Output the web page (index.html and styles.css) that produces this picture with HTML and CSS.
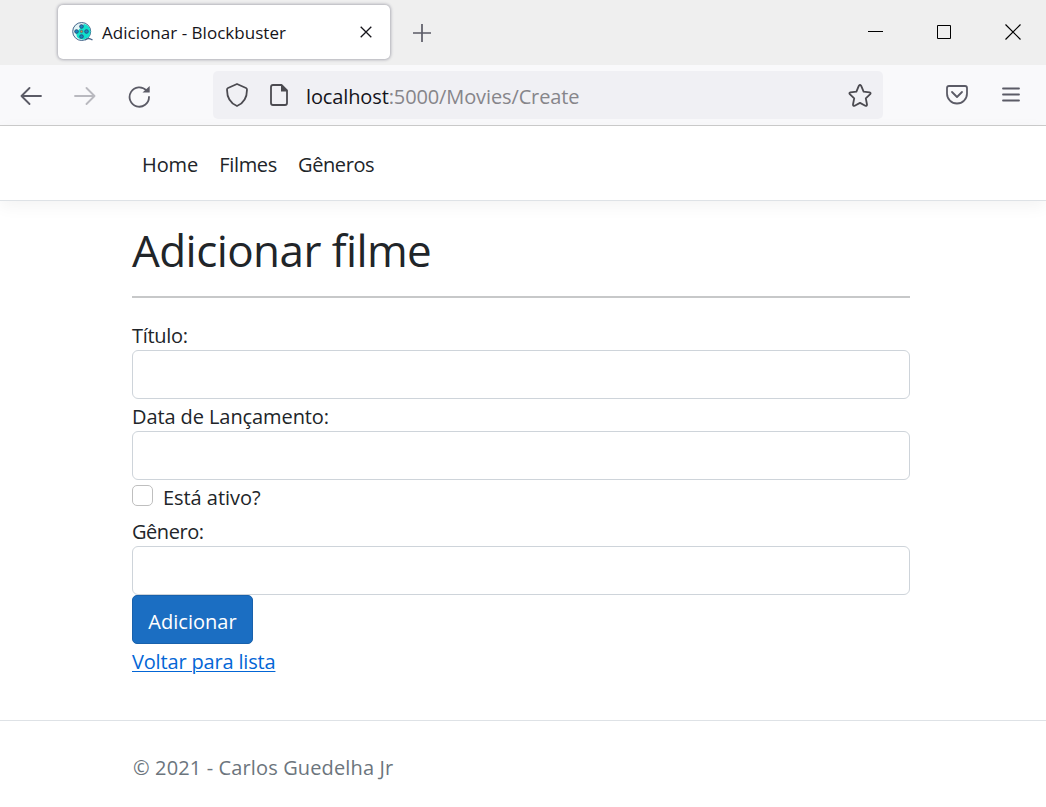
FILE: index.html
```html
<!DOCTYPE html>
<html lang="pt-BR">
<head>
<meta charset="utf-8">
<title>Adicionar - Blockbuster</title>
<link rel="stylesheet" href="styles.css">
</head>
<body>
<div class="tabs">
  <div class="tab">
    <svg class="favicon" width="22" height="20" viewBox="0 0 22 20">
      <circle cx="9.7" cy="9.5" r="9" fill="#e2f4f6" stroke="#44648a"/>
      <path d="M12 2a7.800 7.800 0 1 1-7 13l-1-4 6-7z" fill="#10e0cc"/>
      <g fill="#1787c5" stroke="#28507c"><circle cx="9.5" cy="4.5" r="1.800"/><circle cx="4.500" cy="9.500" r="1.800"/><circle cx="14.500" cy="9.500" r="1.800"/><circle cx="9.500" cy="14.500" r="1.800"/></g>
      <circle cx="9.5" cy="9.5" r="1.200" fill="#d99145" stroke="#28507c" stroke-width=".6"/>
      <path d="M13 18c3-2 4-2 7.500 0" fill="none" stroke="#44648a" stroke-width="1.4"/>
    </svg>
    <span class="tab-title">Adicionar - Blockbuster</span>
    <svg class="tab-close" width="12" height="12" viewBox="0 0 12 12"><path d="M.7.7l10.600 10.600M11.300.7L.7 11.300" stroke="#15141a" stroke-width="1.3"/></svg>
  </div>
  <svg class="new-tab" width="18" height="18" viewBox="0 0 18 18"><path d="M9 0v18M0 9h18" stroke="#5b5b66" stroke-width="1.7"/></svg>
  <div class="window-controls">
    <svg width="15" height="15" viewBox="0 0 15 15"><path d="M0 6.500h15" stroke="#000"/></svg>
    <svg class="maximize" width="14" height="14" viewBox="0 0 14 14"><path d="M.5.5h13v13H.5z" fill="none" stroke="#000"/></svg>
    <svg class="close" width="16" height="16" viewBox="0 0 16 16"><path d="M.5.500l15 15M15.500.500l-15 15" stroke="#000" stroke-width="1.200"/></svg>
  </div>
</div>
<div class="toolbar">
  <svg class="back" width="22" height="18" viewBox="0 0 22 18"><path d="M21 9H1.500M9.500 1l-8 8 8 8" class="stroke"/></svg>
  <svg class="forward" width="22" height="18" viewBox="0 0 22 18"><path d="M1 9h19.500M12.500 1l8 8-8 8" class="stroke"/></svg>
  <svg class="reload" width="23" height="23" viewBox="0 0 23 23"><path d="M18.500 5.500A9.700 9.700 0 1 0 21 12" class="stroke"/><path d="M21.700 1v6.500h-7.200z" fill="#5b5b66"/></svg>
  <div class="address">
    <svg class="shield" width="22" height="24" viewBox="0 0 22 24"><path d="M11 1l9 4q1 .5 1 1.700C21 14 18 20 11 23 4 20 1 14 1 6.700Q1 5.500 2 5z" class="stroke dark"/></svg>
    <svg class="page" width="18" height="22" viewBox="0 0 18 22"><path d="M3 1h8.500L17 6.500V19q0 2-2 2H3q-2 0-2-2V3q0-2 2-2z" class="stroke dark"/><path d="M11 1v6.500h6.200z" fill="#4b4a50"/></svg>
    <span class="url"><span class="host">localhost</span>:5000/Movies/Create</span>
    <svg class="star" width="24" height="23" viewBox="0 0 24 23"><path d="M10.900 1.700q1.100-1.400 2.200 0L15.600 7.700l6 .7q1.600.4.600 1.700L17.800 14.300l1.200 6.200q0 1.800-1.700 1.200L12 18.900l-5.300 2.800Q5 22.300 5 20.500l1.200-6.200-4.400-4.200q-1-1.300.6-1.700l6-.7z" class="stroke dark"/></svg>
  </div>
  <svg class="pocket" width="22" height="20" viewBox="0 0 22 20"><path d="M3 1h16q2 0 2 2v5.500a10 10 0 0 1-20 0V3q0-2 2-2z" class="stroke"/><path d="M6 7l5 5 5-5" class="stroke"/></svg>
  <svg class="menu" width="18" height="15" viewBox="0 0 18 15"><path d="M1 1.500h16M1 7.500h16M1 13.500h16" class="stroke"/></svg>
</div>
<header class="site-header">
  <nav class="nav"><a class="nav-home">Home</a><a class="nav-movies">Filmes</a><a class="nav-genres">Gêneros</a></nav>
</header>
<main class="container">
  <h1 class="title">Adicionar filme</h1>
  <hr class="rule">
  <form class="form">
    <label class="label" for="t"><span class="l-title">Título:</span></label>
    <input class="input" id="t">
    <label class="label" for="d"><span class="l-date">Data de Lançamento:</span></label>
    <input class="input" id="d">
    <label class="check"><input class="checkbox" type="checkbox"><span class="l-active">Está ativo?</span></label>
    <label class="label" for="g"><span class="l-genre">Gênero:</span></label>
    <input class="input" id="g">
    <button class="button" type="button">Adicionar</button>
  </form>
  <div class="back-row"><a class="link" href="#">Voltar para lista</a></div>
</main>
<footer class="footer"><span class="copyright">© 2021 - Carlos Guedelha Jr</span></footer>
</body>
</html>
```
FILE: styles.css
```css
* { box-sizing: border-box; }
body { margin: 0; height: 807px; overflow: hidden; background: #fff; color: #212529; font: 20px/32px "Open Sans", "Noto Sans", sans-serif; font-kerning: normal; }
svg { display: block; flex: none; }
span, a { white-space: nowrap; }
.stroke { fill: none; stroke: #5b5b66; stroke-width: 1.8; stroke-linecap: round; stroke-linejoin: round; }
.dark { stroke: #4b4a50; }

.tabs { height: 65px; background: #efefef; display: flex; align-items: center; padding: 0 25px 0 58px; }
.tab { width: 332px; height: 54px; margin-bottom: 2px; background: #fff; border-radius: 5px; box-shadow: 0 0 3px 1px #b0b0b8; display: flex; align-items: center; padding: 0 18px 0 14px; }
.tab-title { margin: 2px 0 0 8px; font-size: 17px; color: #15141a; letter-spacing: .03px; }
.tab-close { margin: 1px 0 0 auto; }
.new-tab { margin-left: 23px; }
.window-controls { margin-left: auto; display: flex; align-items: center; gap: 54px; }
.maximize, .close { margin-bottom: 2px; }

.toolbar { height: 61px; background: #f9f9fb; border-bottom: 1px solid #ccc; display: flex; align-items: center; padding-left: 20px; }
.back { margin-top: 2px; }
.forward { margin: 2px 0 0 32px; opacity: .4; }
.reload { margin: 2px 0 0 32px; }
.address { width: 670px; height: 48px; margin: 0 0 1px 62px; background: #f0f0f4; border-radius: 5px; display: flex; align-items: center; padding: 0 11px 0 13px; }
.page { margin-left: 22px; }
.url { margin: 4px 0 0 18px; color: #86858a; letter-spacing: -.12px; }
.host { color: #15141a; }
.star { margin: 2px 0 0 auto; }
.pocket { margin: 0 0 0 63px; }
.menu { margin: 0 0 1px 34px; }

.site-header { height: 75px; border-bottom: 1px solid #dee2e6; box-shadow: 0 5px 16px rgba(0,0,0,.05); padding: 23px 0 0 142px; }
.nav { display: flex; gap: 21px; }
.nav-home { letter-spacing: -.1px; }
.nav-movies { letter-spacing: -.3px; }
.nav-genres { letter-spacing: -.4px; }

.container { width: 778px; margin-left: 132px; height: 519px; }
.title { margin: 0; height: 95px; padding-top: 23px; font-size: 44px; font-weight: 400; line-height: 52px; letter-spacing: -.57px; white-space: nowrap; }
.rule { height: 2px; margin: 0; border: 0; background: #c7c8c9; }
.form { display: flex; flex-direction: column; padding-top: 20px; }
.label { height: 32px; padding-top: 2px; letter-spacing: -.3px; }
.l-date { letter-spacing: -.09px; }
.l-genre { letter-spacing: -.45px; }
.input { width: 100%; height: 49px; border: 1px solid #ced4da; border-radius: 6px; background: #fff; padding: 0 16px; font: inherit; }
.check { height: 34px; display: flex; align-items: flex-start; gap: 10px; padding-top: 2px; letter-spacing: -.05px; }
.checkbox { appearance: none; width: 21px; height: 21px; margin: 3px 0 0; border: 1px solid #bfbfbf; border-radius: 5px; background: #fff; }
.button { align-self: flex-start; width: 121px; height: 49px; padding: 4px 0 0; border: 1px solid #1861ac; border-radius: 5px; background: #1b6ec2; color: #fff; font: inherit; letter-spacing: .02px; }
.back-row { height: 32px; padding-top: 2px; }
.link { color: #0366d6; letter-spacing: -.17px; text-decoration: underline; text-decoration-thickness: 1px; text-underline-offset: 2px; }
.footer { height: 87px; border-top: 1px solid #dee2e6; color: #6c757d; padding: 31px 0 0 133px; }
.copyright { letter-spacing: .13px; }
```
